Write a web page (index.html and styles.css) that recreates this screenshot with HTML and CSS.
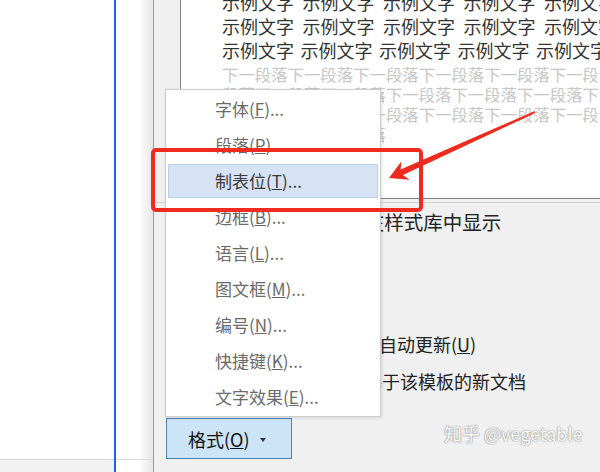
FILE: index.html
```html
<!DOCTYPE html>
<html lang="zh-CN">
<head>
    <meta charset="UTF-8">
    <meta name="viewport" content="width=device-width, initial-scale=1.0">
    <title>修改样式 - 格式菜单</title>
    <link rel="stylesheet" href="styles.css">
</head>
<body>
    <div class="window">
        <!-- document page behind the dialog -->
        <div class="doc-page"></div>
        <div class="doc-edge"></div>
        <div class="doc-gutter"></div>

        <div class="dialog">
            <div class="preview">
                <div class="sample-row wide"><span>示例文字</span><span>示例文字</span><span>示例文字</span><span>示例文字</span><span>示例文字</span></div>
                <div class="sample-row wide"><span>示例文字</span><span>示例文字</span><span>示例文字</span><span>示例文字</span><span>示例文字</span></div>
                <div class="sample-row"><span>示例文字</span><span>示例文字</span><span>示例文字</span><span>示例文字</span><span>示例文字</span></div>
                <div class="next-para">
                    <p>下一段落下一段落下一段落下一段落下一段落下一段落下一段落</p>
                    <p>段落下一段落下一段落下一段落下一段落下一段落下一段落下一</p>
                    <p>下一段落下一段落下一段落下一段落下一段落下一段落下一段落</p>
                    <p>段落下一段落下一段落</p>
                </div>
            </div>
            <div class="rule"></div>

            <p class="desc">样式: 在样式库中显示</p>

            <div class="opts opts-check">
                <label class="opt"><span class="box checked"></span><span>添加到样式库(<u>S</u>)</span></label>
                <label class="opt"><span class="box"></span><span>自动更新(<u>U</u>)</span></label>
            </div>
            <div class="opts opts-radio">
                <label class="opt"><span class="radio on"></span><span>仅限此文档(<u>D</u>)</span></label>
                <label class="opt"><span class="radio"></span><span>基于该模板的新文档</span></label>
            </div>

            <div class="footer">
                <div class="format-wrap">
                    <ul class="menu">
                        <li>字体(<u>F</u>)...</li>
                        <li>段落(<u>P</u>)...</li>
                        <li class="active">制表位(<u>T</u>)...</li>
                        <li>边框(<u>B</u>)...</li>
                        <li>语言(<u>L</u>)...</li>
                        <li>图文框(<u>M</u>)...</li>
                        <li>编号(<u>N</u>)...</li>
                        <li>快捷键(<u>K</u>)...</li>
                        <li>文字效果(<u>E</u>)...</li>
                    </ul>
                    <button class="format-btn">格式(<u>O</u>)<span class="caret"></span></button>
                </div>
            </div>
        </div>

        <!-- red markup on top -->
        <div class="mark-box"></div>
        <svg class="mark-arrow" width="600" height="472" viewBox="0 0 600 472">
            <polygon points="389,178 409.5,179.7 403,174.9 535.4,112.9 534.6,111.1 400.6,169.5 401.3,161.5" fill="#ef2a1f"/>
        </svg>

        <div class="watermark">知乎 @vegetable</div>
    </div>
</body>
</html>
```

FILE: styles.css
```css
body {
    margin: 0;
    padding: 0;
    font-family: "Noto Sans CJK SC", "Noto Sans", sans-serif;
    background-color: #fff;
}

.window {
    position: relative;
    display: flex;
    width: 600px;
    height: 472px;
    overflow: hidden;
}

.doc-page {
    width: 114px;
    flex-shrink: 0;
    background: linear-gradient(to bottom, #fff 459px, #dadada 459px, #dadada 460px, #f2f2f2 460px);
}

.doc-edge {
    width: 2px;
    flex-shrink: 0;
    background-color: #1f63d6;
}

.doc-gutter {
    width: 37px;
    flex-shrink: 0;
    border-right: 1px solid #9c9c9c;
    background:
        linear-gradient(to bottom, transparent 459px, #dadada 459px, #dadada 460px, transparent 460px),
        linear-gradient(to right, #fff 0, #fff 60%, #e6e6e6 100%);
}

.dialog {
    flex: 1;
    display: flex;
    flex-direction: column;
    background-color: #f0f0f0;
    padding-left: 26px;
    color: #222;
}

.preview {
    height: 198px;
    flex-shrink: 0;
    background-color: #fff;
    border-left: 1px solid #828282;
    border-bottom: 1px solid #828282;
    padding-left: 41px;
    overflow: hidden;
}

.sample-row {
    display: flex;
    gap: 6.5px;
    font-size: 18px;
    line-height: 24px;
    color: #333;
    white-space: nowrap;
}

.sample-row:first-child {
    margin-top: -10px;
}

.sample-row.wide {
    gap: 8.5px;
}

.next-para {
    margin-top: 2px;
}

.next-para p {
    margin: 0;
    font-size: 16.4px;
    line-height: 20px;
    color: #c6c6c6;
    white-space: nowrap;
}

.rule {
    height: 1px;
    margin-top: 3px;
    margin-left: -26px;
    background-color: #cfcfcf;
}

.desc {
    margin: 7px 0 0 136px;
    font-size: 19.5px;
    line-height: 24px;
    white-space: nowrap;
}

.opts {
    display: flex;
    font-size: 18px;
    line-height: 24px;
    white-space: nowrap;
}

.opts-check {
    margin-top: 98px;
}

.opts-radio {
    margin-top: 13px;
}

.opt {
    display: flex;
    align-items: center;
    gap: 5px;
}

.opts-check .opt:first-child {
    width: 181px;
}

.opts-radio .opt:first-child {
    width: 166px;
}

.box {
    width: 11px;
    height: 11px;
    border: 1px solid #333;
    background-color: #fff;
}

.radio {
    width: 11px;
    height: 11px;
    border: 1px solid #333;
    border-radius: 50%;
    background-color: #fff;
}

.footer {
    margin-top: auto;
    margin-left: -14px;
    padding-bottom: 13px;
}

.format-wrap {
    position: relative;
    width: 126px;
}

.format-btn {
    display: flex;
    align-items: center;
    width: 126px;
    height: 41px;
    padding: 0 0 0 21px;
    border: 1px solid #4d82b3;
    background-color: #cce4f7;
    font-family: inherit;
    font-size: 18px;
    color: #111;
    cursor: pointer;
}

.caret {
    width: 0;
    height: 0;
    margin-left: 10px;
    margin-top: 2px;
    border-left: 3.5px solid transparent;
    border-right: 3.5px solid transparent;
    border-top: 4px solid #333;
}

.menu {
    position: absolute;
    left: -1px;
    bottom: 42px;
    width: 214px;
    margin: 0;
    padding: 1px 0;
    list-style: none;
    display: flex;
    flex-direction: column;
    background-color: #fff;
    border: 1px solid #cdcdcd;
    box-shadow: 1px 1px 3px rgba(0, 0, 0, 0.12);
}

.menu li {
    height: 34px;
    margin: 1px 2px;
    padding-left: 47px;
    font-size: 17px;
    line-height: 34px;
    color: #6a6a6a;
    white-space: nowrap;
}

.menu li.active {
    padding-left: 46px;
    line-height: 32px;
    height: 32px;
    background-color: #d6e3f4;
    border: 1px solid #bccfe9;
    color: #3a3a3a;
}

.mark-box {
    position: absolute;
    left: 151px;
    top: 148px;
    width: 264px;
    height: 56px;
    border: 4px solid #ef2a1f;
    border-radius: 5px;
}

.mark-arrow {
    position: absolute;
    left: 0;
    top: 0;
}

.watermark {
    position: absolute;
    left: 444px;
    top: 421px;
    font-size: 18px;
    line-height: 24px;
    color: #fff;
    text-shadow: 0 0 1px #777, 0 0 2px #999;
    white-space: nowrap;
}
```
